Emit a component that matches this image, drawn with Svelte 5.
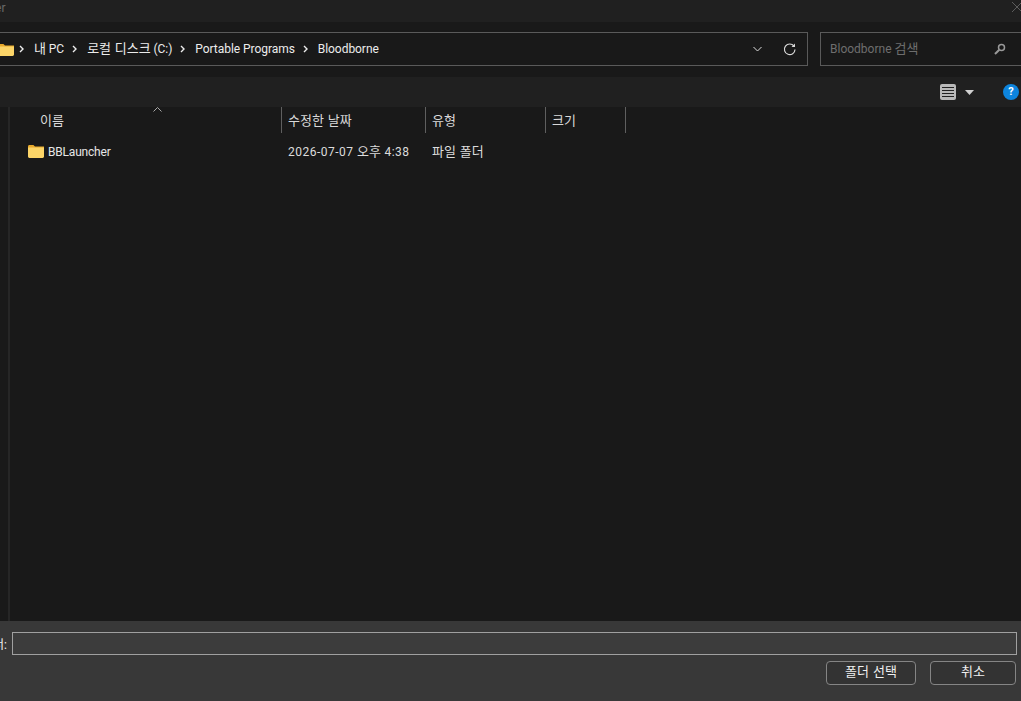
<script>
	const crumbs = ['내 PC', '로컬 디스크 (C:)', 'Portable Programs', 'Bloodborne'];
	const columns = [
		{ name: '이름', width: 272, pad: 30 },
		{ name: '수정한 날짜', width: 144, pad: 6 },
		{ name: '유형', width: 120, pad: 6 },
		{ name: '크기', width: 80, pad: 6 }
	];

	// hangul runs get a slightly bigger size so they keep the width of the original font
	function parts(text) {
		return text.split(/([가-힣]+(?: [가-힣]+)*)/).filter((v) => v != '').map((v) => ({
			text: v,
			ko: /[가-힣]/.test(v)
		}));
	}
</script>

{#snippet mixed(text)}
	{#each parts(text) as part}<span class:ko={part.ko}>{part.text}</span>{/each}
{/snippet}

<div class="dialog">
	<div class="title">
		<span class="title-text">Folder</span>
		<svg class="close" width="12" height="12" viewBox="0 0 12 12"><path d="M1 1l10 10M11 1L1 11" stroke="#5c5c5c" fill="none" /></svg>
	</div>

	<div class="navbar">
		<div class="address">
			<svg class="folder small" width="16" height="13" viewBox="0 0 16 13">
				<path d="M0 2.500C0 1.700.6 1 1.400 1h4l1.600 1.600H16V4H0z" fill="#e8a92c" />
				<path d="M0 3.600h16v8c0 .8-.6 1.400-1.400 1.400H1.400C.6 13 0 12.400 0 11.600z" fill="#fcd568" />
			</svg>
			{#each crumbs as crumb}
				<svg class="chev" width="5" height="8" viewBox="0 0 5 8"><path d="M1 1l3 3-3 3" stroke="#eee" stroke-width="1.400" fill="none" /></svg>
				<span class="crumb">{@render mixed(crumb)}</span>
			{/each}
			<span class="grow"></span>
			<svg class="down" width="9" height="6" viewBox="0 0 9 6"><path d="M.5 1l4 4 4-4" stroke="#ddd" fill="none" /></svg>
			<svg class="refresh" width="13" height="13" viewBox="0 0 13 13">
				<path d="M11 3.200A5.300 5.300 0 1 0 12 6.500" stroke="#d8d8d8" stroke-width="1.200" fill="none" />
				<path d="M12 .6v3.500H8.500z" fill="#d8d8d8" />
			</svg>
		</div>
		<div class="search">
			<span class="placeholder">{@render mixed('Bloodborne 검색')}</span>
			<svg width="12" height="12" viewBox="0 0 12 12">
				<circle cx="7.500" cy="4.500" r="3" stroke="#999" stroke-width="1.500" fill="none" />
				<path d="M5.300 6.700L1 11" stroke="#999" stroke-width="2" fill="none" />
			</svg>
		</div>
	</div>

	<div class="commands">
		<svg width="16" height="16" viewBox="0 0 16 16">
			<rect width="16" height="16" rx="2" fill="#b9b9b9" />
			<path d="M2 3.500h12M2 6.500h12M2 9.500h12M2 12.500h12" stroke="#222" />
		</svg>
		<svg class="caret" width="9" height="5" viewBox="0 0 9 5"><path d="M0 0h9L4.500 5z" fill="#d0d0d0" /></svg>
		<div class="help">?</div>
	</div>

	<div class="content">
		<div class="rail"></div>
		<div class="list">
			<svg class="sort" width="9" height="5" viewBox="0 0 9 5"><path d="M.5 4.500l4-4 4 4" stroke="#aaa" fill="none" /></svg>
			<div class="header">
				{#each columns as col}
					<div class="col" style="width: {col.width}px; padding-left: {col.pad}px"><span class="ko">{col.name}</span></div>
				{/each}
			</div>
			<div class="row">
				<div class="name">
					<svg width="16" height="13" viewBox="0 0 16 13">
						<path d="M0 1.500C0 .7.600 0 1.400 0h4L7 1.600h9V3H0z" fill="#e8a92c" />
						<path d="M0 2.600h16v9c0 .8-.6 1.400-1.400 1.400H1.400C.6 13 0 12.400 0 11.600z" fill="#fcd568" />
					</svg>
					<span class="file">BBLauncher</span>
				</div>
				<div class="date">{@render mixed('2026-07-07 오후 4:38')}</div>
				<div class="type"><span class="ko">파일 폴더</span></div>
			</div>
		</div>
	</div>

	<div class="footer">
		<div class="field">
			<label for="folder">폴더:</label>
			<input id="folder" type="text" />
		</div>
		<div class="buttons">
			<button class="select"><span class="ko">폴더 선택</span></button>
			<button class="cancel"><span class="ko">취소</span></button>
		</div>
	</div>
</div>

<style>
	:global(body) {
		margin: 0;
		background: #191919;
		overflow: hidden;
	}

	.dialog {
		width: 1021px;
		height: 701px;
		display: flex;
		flex-direction: column;
		overflow: hidden;
		color: #e6e6e6;
		font-family: Roboto, "Noto Sans CJK KR", sans-serif;
		font-size: 12px;
	}
	.ko {
		font-family: "Noto Sans CJK KR", sans-serif;
		font-size: 13px;
		line-height: 1;
		word-spacing: 1px;
	}

	.title {
		height: 22px;
		flex: none;
		display: flex;
		align-items: center;
		justify-content: space-between;
		background: #202020;
		color: #6a6a6a;
	}
	.title-text {
		margin-left: -28px;
		margin-top: -7px;
	}
	.close {
		margin: -8px -2px 0 0;
	}

	.navbar {
		height: 55px;
		flex: none;
		box-sizing: border-box;
		padding: 10px 0 11px;
		display: flex;
		gap: 12px;
		background: #191919;
	}
	.address {
		width: 809px;
		flex: none;
		box-sizing: border-box;
		margin-left: -1px;
		border: 1px solid #5a5a5a;
		border-left: 0;
		display: flex;
		align-items: center;
		padding-right: 11px;
	}
	.folder.small {
		margin-left: -1px;
	}
	.chev {
		margin: 0 10px 0 5px;
	}
	.crumb {
		color: #ececec;
		padding-right: 1px;
		margin-right: 2px;
		margin-top: -1px;
		letter-spacing: -0.05px;
	}
	.grow {
		flex: 1;
	}
	.down {
		margin-right: 21px;
	}
	.search {
		flex: 1;
		margin-right: -10px;
		box-sizing: border-box;
		border: 1px solid #5a5a5a;
		display: flex;
		align-items: center;
		justify-content: space-between;
		padding: 0 24px 0 9px;
	}
	.placeholder {
		color: #6e6e6e;
		margin-top: -2px;
	}

	.commands {
		height: 30px;
		flex: none;
		display: flex;
		align-items: center;
		box-sizing: border-box;
		padding-left: 940px;
		background: #202020;
	}
	.caret {
		margin-left: 9px;
	}
	.help {
		width: 16px;
		height: 16px;
		margin-left: 29px;
		flex: none;
		border-radius: 50%;
		background: #0d84dd;
		color: #fff;
		font-weight: 700;
		font-size: 11px;
		line-height: 16px;
		text-align: center;
	}

	.content {
		flex: 1;
		display: flex;
		min-height: 0;
		background: #191919;
	}
	.rail {
		width: 2px;
		margin-left: 8px;
		background: #262626;
		flex: none;
	}
	.list {
		flex: 1;
		position: relative;
	}
	.sort {
		position: absolute;
		left: 143px;
		top: 0;
	}
	.header {
		height: 26px;
		display: flex;
		color: #d9d9d9;
	}
	.col {
		box-sizing: border-box;
		border-right: 1px solid #5f5f5f;
		line-height: 26px;
		padding-top: 1px;
	}
	.row {
		margin-top: 5px;
		height: 26px;
		display: flex;
		align-items: center;
		color: #dcdcdc;
	}
	.name {
		width: 272px;
		box-sizing: border-box;
		padding-left: 18px;
		display: flex;
		align-items: center;
		gap: 4px;
		color: #e6e6e6;
	}
	.file {
		margin-top: 1px;
		letter-spacing: -0.2px;
	}
	.date {
		width: 144px;
		padding-left: 6px;
		box-sizing: border-box;
		letter-spacing: 0.5px;
	}
	.date .ko {
		letter-spacing: 0;
	}
	.type {
		padding-left: 6px;
	}

	.footer {
		height: 80px;
		flex: none;
		box-sizing: border-box;
		padding: 11px 4px 0 0;
		background: #383838;
	}
	.field {
		display: flex;
		align-items: center;
		gap: 5px;
	}
	label {
		width: 7px;
		flex: none;
		display: flex;
		justify-content: flex-end;
		white-space: nowrap;
		color: #eee;
	}
	input {
		flex: 1;
		height: 23px;
		box-sizing: border-box;
		border: 1px solid #a0a0a0;
		background: #3c3c3c;
		padding: 0 4px;
		outline: none;
	}
	.buttons {
		display: flex;
		justify-content: flex-end;
		gap: 14px;
		margin-top: 6px;
		padding-right: 1px;
	}
	button {
		height: 24px;
		box-sizing: border-box;
		border: 1px solid #858585;
		border-radius: 4px;
		background: #333;
		color: #efefef;
		font: inherit;
		padding: 0 0 3px;
	}
	.select {
		width: 90px;
	}
	.cancel {
		width: 86px;
	}
</style>
